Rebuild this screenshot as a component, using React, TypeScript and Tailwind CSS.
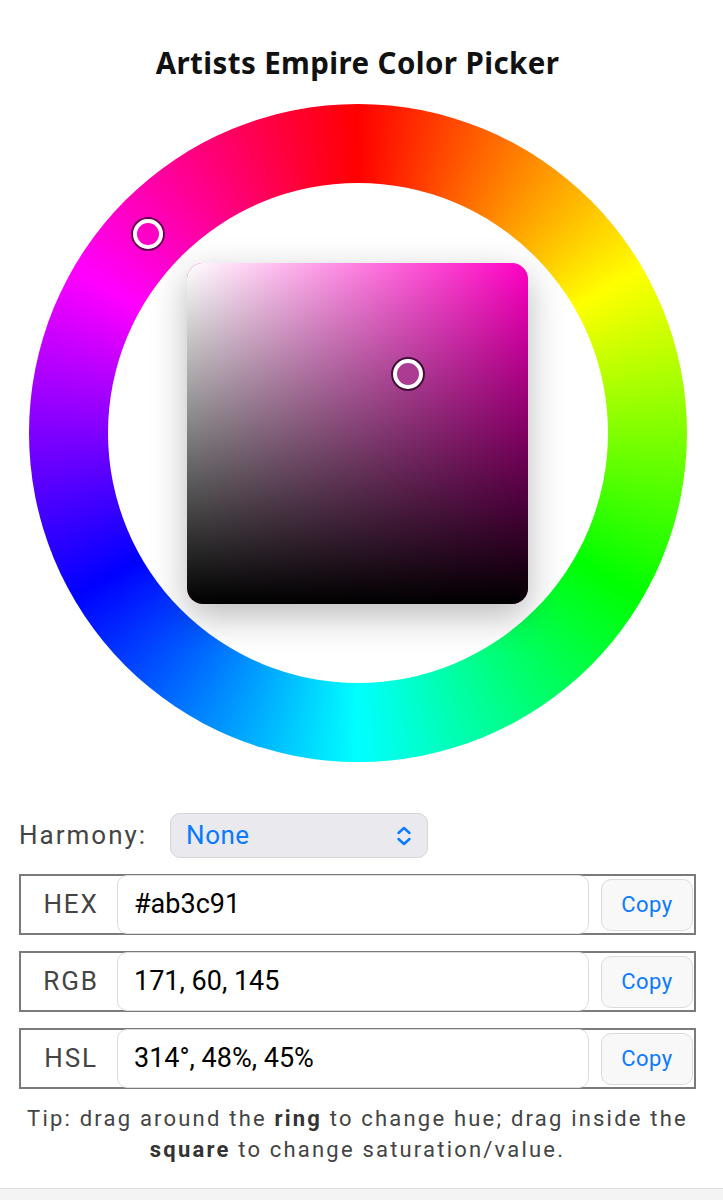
import React from 'react';

const rows = [
  { label: 'HEX', value: '#ab3c91' },
  { label: 'RGB', value: '171, 60, 145' },
  { label: 'HSL', value: '314°, 48%, 45%' },
];

const UpDown = () => (
  <svg width="18" height="22" viewBox="0 0 18 22" fill="none" stroke="#0a7aff" strokeWidth="2.4" strokeLinecap="round" strokeLinejoin="round">
    <path d="M3.5 8 9 3l5.5 5" />
    <path d="M3.5 14 9 19l5.5-5" />
  </svg>
);

export default function App() {
  return (
    <div className="min-h-[1200px] bg-white flex flex-col font-['Roboto',sans-serif]">
      <div className="w-[677px] ml-[19px] flex flex-col items-center">
        <h1 className="mt-[44px] text-[29.5px] leading-[38px] font-bold text-[#111] font-['Noto_Sans',sans-serif] tracking-[0.4px]">
          Artists Empire Color Picker
        </h1>

        {/* hue ring */}
        <div className="relative mt-[22px] w-[658px] h-[658px] rounded-full bg-[conic-gradient(#f00,#ff0,#0f0,#0ff,#00f,#f0f,#f00)] flex items-center justify-center">
          <div className="w-[500px] h-[500px] rounded-full bg-white flex items-center justify-center">
            <div className="relative w-[341px] h-[341px] rounded-[16px] bg-[#ff00c4] shadow-[0_12px_36px_rgba(0,0,0,0.28)] overflow-hidden">
              <div className="absolute inset-0 bg-gradient-to-r from-white to-transparent" />
              <div className="absolute inset-0 bg-gradient-to-b from-transparent to-black" />
              <div className="absolute left-[206px] top-[96px] w-[30px] h-[30px] rounded-full border-[4px] border-white bg-[#ab3c91] shadow-[0_0_0_2px_rgba(40,0,30,0.8)]" />
            </div>
          </div>
          <div className="absolute left-[104px] top-[115px] w-[30px] h-[30px] rounded-full border-[4px] border-white shadow-[0_0_0_2px_rgba(60,0,50,0.8)]" />
        </div>

        {/* harmony */}
        <div className="self-stretch mt-[51px] flex items-center gap-[23px]">
          <span className="text-[26px] text-[#444] tracking-[2px]">Harmony:</span>
          <div className="w-[258px] h-[45px] rounded-[10px] bg-[#e9e9ee] border border-[#d4d4d9] flex items-center justify-between pl-[15px] pr-[14px]">
            <span className="text-[26px] text-[#0a7aff] tracking-[0.5px]">None</span>
            <UpDown />
          </div>
        </div>

        <div className="self-stretch mt-[16px] flex flex-col gap-[16px]">
          {rows.map((r) => (
            <div key={r.label} className="h-[61px] border-2 border-[#7a7a7a] flex items-center">
              <span className="w-[96px] pl-[4px] text-center text-[26px] text-[#444] tracking-[1.8px]">{r.label}</span>
              <div className="w-[472px] h-[59px] rounded-[10px] border border-[#dcdcdc] flex items-center pl-[16px] text-[27px] text-black">
                {r.value}
              </div>
              <button className="ml-auto mr-px w-[92px] h-[52px] rounded-[10px] bg-[#f8f8f8] border border-[#dcdcdc] text-[22px] text-[#0a7aff] tracking-[0.5px]">
                Copy
              </button>
            </div>
          ))}
        </div>

        <p className="mt-[14px] text-center text-[22px] leading-[31px] text-[#444] tracking-[2.2px] whitespace-nowrap">
          Tip: drag around the <b className="text-[#333]">ring</b> to change hue; drag inside the
          <br />
          <b className="text-[#333]">square</b> to change saturation/value.
        </p>
      </div>
      <div className="mt-auto h-[12px] border-t border-[#dcdcdc] bg-[#f4f4f4]" />
    </div>
  );
}
